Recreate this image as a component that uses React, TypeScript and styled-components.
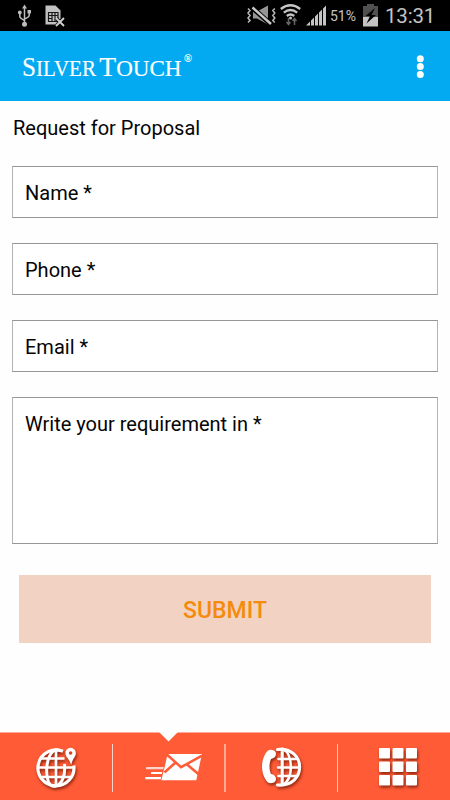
import React from "react";
import styled, { createGlobalStyle } from "styled-components";

const GlobalStyle = createGlobalStyle`
  * { box-sizing: border-box; }
  body { margin: 0; background: #fefefe; }
`;

const Screen = styled.div`
  width: 450px;
  height: 800px;
  display: flex;
  flex-direction: column;
  overflow: hidden;
  background: #fefefe;
  color: #050505;
  font-family: Roboto, "Liberation Sans", sans-serif;
`;

const StatusBar = styled.header`
  height: 31px;
  flex: none;
  display: flex;
  align-items: flex-start;
  justify-content: space-between;
  padding: 0 17px 0 16px;
  background: #000;
  color: #c4c4c4;
`;

const StatusGroup = styled.div`
  height: 31px;
  display: flex;
  align-items: flex-start;
`;

const StatusIcon = styled.svg<{ $gap?: number }>`
  display: block;
  flex: none;
  height: 31px;
  margin-left: ${(p) => p.$gap ?? 0}px;
`;

const Percent = styled.span`
  width: 28px;
  margin-left: 3px;
  font-size: 14px;
  line-height: 33px;
  white-space: nowrap;
`;

const Clock = styled.span`
  width: 48px;
  margin-left: 7px;
  font-size: 20.5px;
  line-height: 32px;
  letter-spacing: -0.2px;
  white-space: nowrap;
`;

const AppBar = styled.nav`
  height: 70px;
  flex: none;
  display: flex;
  align-items: center;
  justify-content: space-between;
  padding: 0 20px;
  background: #03a9f1;
`;

const Logo = styled.svg`
  display: block;
  font-family: "Liberation Serif", serif;
`;

const MenuButton = styled.button`
  width: 20px;
  height: 40px;
  padding: 0;
  border: 0;
  background: none;
  svg { display: block; }
`;

const Form = styled.form`
  flex: 1;
  display: flex;
  flex-direction: column;
  padding: 13px 12px 0;
`;

const Title = styled.h1`
  height: 27px;
  margin: 0 0 25px 1px;
  font-size: 20px;
  font-weight: 400;
  line-height: 29px;
`;

const Field = styled.label<{ $height?: number }>`
  display: block;
  flex: none;
  height: ${(p) => p.$height ?? 52}px;
  margin-bottom: 25px;
  padding: 0 12px;
  border: 1px solid;
  border-color: #969696 #b4b4b4;
  background: #fff;
  font-size: 20px;
  line-height: 52px;
`;

const Submit = styled.button`
  flex: none;
  height: 68px;
  margin: 6px 7px 0;
  padding: 3px 0 0;
  border: 0;
  background: #f1d2c3;
  color: #f58b0b;
  font: 500 23px/65px Roboto, "Liberation Sans", sans-serif;
`;

const TabBar = styled.footer`
  position: relative;
  height: 68px;
  flex: none;
  display: grid;
  grid-template-columns: 113px 113px 112px 112px;
  border-top: 1px solid #ffaa95;
  background: #ff5b37;
`;

const Notch = styled.svg`
  position: absolute;
  left: 158px;
  top: -1px;
`;

const Tab = styled.div<{ $line?: string; $lineWidth?: number }>`
  display: flex;
  align-items: center;
  justify-content: space-between;

  &::after {
    content: "";
    width: ${(p) => p.$lineWidth ?? 1}px;
    height: 48px;
    margin-top: 2px;
    background: ${(p) => p.$line ?? "transparent"};
  }
`;

const TabIcon = styled.svg<{ $flat?: boolean }>`
  display: block;
  width: 111px;
  height: 67px;
  flex: none;
  filter: ${(p) => (p.$flat ? "none" : "drop-shadow(1px 2px 1.5px rgba(100, 20, 0, 0.75))")};
`;

const UsbIcon = () => (
  <StatusIcon width="17" viewBox="16 0 17 31" fill="none" stroke="#bdbdbd" strokeWidth="1.5">
    <path d="M24.5 8v15M19.8 13v3.5q0 1.5 4.7 4M29.2 13v2.5q0 1.5-4.7 3.5" />
    <path d="M24.5 4.5l2.5 4h-5z" fill="#bdbdbd" stroke="none" />
    <circle cx="24.5" cy="24.2" r="2.5" fill="#bdbdbd" stroke="none" />
    <circle cx="19.8" cy="12.5" r="1.9" fill="#bdbdbd" stroke="none" />
    <path d="M27.5 10h3.5v3.5h-3.5z" fill="#bdbdbd" stroke="none" />
  </StatusIcon>
);

const SimIcon = () => (
  <StatusIcon width="20" viewBox="45 0 20 31" $gap={12}>
    <path d="M45.5 5.5h10l5 5v14h-15z" fill="#c2c2c2" />
    <path d="M48.5 12.5h9.5v9h-9.5zM48.5 15.5h3.5M48.5 18.5h3.5M52 12.5v9M55 12.5v9M52 15.5h6" fill="none" stroke="#171717" strokeWidth="1.2" />
    <path d="M56.5 18.5l7 7M63.5 18.5l-7 7" stroke="#000" strokeWidth="3.5" />
    <path d="M56 18l8 8M64 18l-8 8" stroke="#d0d0d0" strokeWidth="1.9" />
  </StatusIcon>
);

const MutedIcon = () => (
  <StatusIcon width="29" viewBox="247 0 29 31">
    <path d="M253 11.5h4l11-6v19l-11-6h-4z" fill="#959595" />
    <path d="M252 7.5l18 16" stroke="#000" strokeWidth="5" />
    <path d="M252.5 7.5l18.5 16.5" stroke="#c8c8c8" strokeWidth="2.4" />
    <path d="M248 8.5l2 2-2 2.5 2 2.5-2 2.5 2 2.5-2 2M274.8 8.5l-2 2 2 2.5-2 2.5 2 2.5-2 2.5 2 2" fill="none" stroke="#b9b9b9" strokeWidth="1.5" />
  </StatusIcon>
);

const WifiIcon = () => (
  <StatusIcon width="21" viewBox="280 0 21 31" $gap={4}>
    <g fill="none" stroke="#c5c5c5" strokeWidth="2.3">
      <path d="M280.8 9Q290.5 1.5 300.2 9M283.8 12.7Q290.5 7.2 297.2 12.7M286.8 16Q290.5 13 294.2 16" />
    </g>
    <circle cx="290.5" cy="18" r="1.5" fill="#c5c5c5" />
    <path d="M288.5 18v6m-2-2l2 2.5 2-2.5M294.5 25v-6m-2 2l2-2.5 2 2.5" fill="none" stroke="#656565" strokeWidth="1.5" />
  </StatusIcon>
);

const SignalIcon = () => (
  <StatusIcon width="21" viewBox="306 0 21 31" $gap={5}>
    <path d="M306 25.5l4-4v4zM311 20.5l3-3v8h-3zM315 16.5l3-3v12h-3zM319 12.5l3-3v16h-3zM323 8.5l3-3v20h-3z" fill="#c5c5c5" />
  </StatusIcon>
);

const BatteryIcon = () => (
  <StatusIcon width="15" viewBox="363 0 15 31" $gap={5}>
    <path d="M363 6h4V4h7v2h4v11h-15z" fill="#505050" />
    <path d="M363 17h15v9.5h-15z" fill="#c4c4c4" />
    <path d="M375 8l-9.5 8h4.5l-3.5 7.5 9.5-8.5h-4.5z" fill="#000" />
  </StatusIcon>
);

const Wordmark = () => (
  <Logo width="174" height="40" viewBox="20 46 174 40" fill="#fff" stroke="#fff" strokeWidth="0.15">
    <text x="22" y="76.3" fontSize="27.5" textLength="74" lengthAdjust="spacingAndGlyphs">
      S<tspan fontSize="23">ILVER</tspan>
    </text>
    <text x="99.3" y="76.3" fontSize="27.5" textLength="82.2" lengthAdjust="spacingAndGlyphs">
      T<tspan fontSize="23">OUCH</tspan>
    </text>
    <text x="184" y="62" fontSize="10" textLength="8" lengthAdjust="spacingAndGlyphs">®</text>
  </Logo>
);

const GlobePinIcon = () => (
  <TabIcon viewBox="0 733 111 67">
    <g fill="none" stroke="#fff">
      <path d="M63 751.3A18 18 0 1 0 73.8 765.5" strokeWidth="3.2" />
      <path d="M60.5 750.5C44 743 42 792 56 785.8c7-2 9.5-12 8.5-22" strokeWidth="3" />
      <path d="M56 749.5v36M39.5 758.5h25M37 767.5h38M39.5 777h32" strokeWidth="2.7" />
    </g>
    <path d="M70.7 747.8a5.2 5.2 0 0 1 5.2 5.4c0 3-3.8 6.7-4.8 11.7-1-5-5.7-8-5.7-11.7a5.2 5.2 0 0 1 5.3-5.4z" fill="#fff" />
    <circle cx="70.6" cy="753" r="1.8" fill="#d94220" />
  </TabIcon>
);

const MailIcon = () => (
  <TabIcon $flat viewBox="113 733 111 67">
    <path d="M167.5 754h34.4l-5.6 26.2h-35l4-15.7z" fill="#fff" />
    <path d="M166.6 754.2l14.4 13 21-11.5M164.5 772.5l10.5-9.5M199 774.5l-12-10" fill="none" stroke="#ff5b37" strokeWidth="2.5" />
    <path d="M146.3 767h17.5l-.5 2.2h-17.5z" fill="#ffd5cb" />
    <path d="M151.3 772h11l-.5 2h-11zM145.5 777h15.7l-.5 2.2h-15.7z" fill="#fff" />
  </TabIcon>
);

const PhoneGlobeIcon = () => (
  <TabIcon viewBox="226 733 111 67">
    <path d="M268 750.5c2-1.3 6-.8 7.5 1.5 1.5 3-.5 6.5-4.5 7-2 4-2 11 0 15 4 .5 6 4 4.5 7-1.5 2.5-5.5 2.8-7.5 1.5-8-8-8-24 0-32z" fill="#fff" />
    <g fill="none" stroke="#fff" strokeWidth="3.1" strokeLinecap="round">
      <path d="M277.5 749.5c29.5-3 29.5 38 0 35.5M282.2 749v36" />
      <path d="M283 749c10 5 11 29 0 36M278.5 759h18M278 767.5h20M278.5 776h18" strokeWidth="2.6" />
    </g>
  </TabIcon>
);

const GridIcon = () => (
  <TabIcon viewBox="338 733 111 67">
    {[748, 761.5, 775].map((y) =>
      [379, 392.5, 406].map((x) => <rect key={`${x}-${y}`} x={x} y={y} width="11" height="10.5" rx="1" fill="#fff" />)
    )}
  </TabIcon>
);

export default function App() {
  return (
    <Screen>
      <GlobalStyle />
      <StatusBar>
        <StatusGroup>
          <UsbIcon />
          <SimIcon />
        </StatusGroup>
        <StatusGroup>
          <MutedIcon />
          <WifiIcon />
          <SignalIcon />
          <Percent>51%</Percent>
          <BatteryIcon />
          <Clock>13:31</Clock>
        </StatusGroup>
      </StatusBar>
      <AppBar>
        <Wordmark />
        <MenuButton aria-label="Menu">
          <svg width="20" height="40" viewBox="410 46 20 40" fill="#fff">
            <circle cx="420.3" cy="58.7" r="3.5" />
            <circle cx="420.3" cy="66.6" r="3.5" />
            <circle cx="420.3" cy="74.6" r="3.5" />
          </svg>
        </MenuButton>
      </AppBar>
      <Form>
        <Title>Request for Proposal</Title>
        <Field>Name *</Field>
        <Field>Phone *</Field>
        <Field>Email *</Field>
        <Field $height={147}>Write your requirement in *</Field>
        <Submit type="button">SUBMIT</Submit>
      </Form>
      <TabBar>
        <Notch width="21" height="11" viewBox="0 0 21 11">
          <path d="M1 0h19l-9.5 9.5z" fill="#fefefe" />
        </Notch>
        <Tab $line="#ffd5c9"><GlobePinIcon /></Tab>
        <Tab $line="#ffa997" $lineWidth={2}><MailIcon /></Tab>
        <Tab $line="#ffd08e"><PhoneGlobeIcon /></Tab>
        <Tab><GridIcon /></Tab>
      </TabBar>
    </Screen>
  );
}
